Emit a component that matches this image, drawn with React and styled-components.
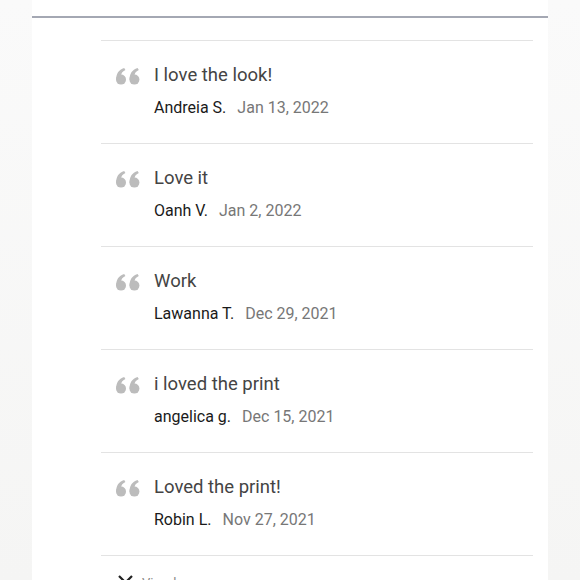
import styled, { createGlobalStyle } from "styled-components";

const GlobalStyle = createGlobalStyle`
  html, body {
    margin: 0;
    padding: 0;
    background: #f6f6f6;
    font-family: Roboto, "Liberation Sans", sans-serif;
  }
`;

const Page = styled.div`
  width: 580px;
  height: 580px;
  overflow: hidden;
  display: flex;
  justify-content: center;
  background: linear-gradient(180deg, #fafafa 0%, #f5f5f4 100%);
`;

const Panel = styled.div`
  width: 516px;
  background: #fff;
  padding-top: 16px;
  display: flex;
  flex-direction: column;
`;

const TopRule = styled.div`
  flex: none;
  height: 2px;
  background: #a4a8b3;
`;

const List = styled.ul`
  flex: none;
  list-style: none;
  margin: 22px 15px 0 69px;
  padding: 0;
`;

const Review = styled.li`
  display: flex;
  gap: 14px;
  padding: 22px 0 24px 15px;
  border-top: 1px solid #e3e3e3;
`;

const Quote = styled.svg`
  flex: none;
  width: 24px;
  height: 17px;
  margin-top: 5px;
  fill: #bcbcbc;
`;

const Body = styled.div`
  display: flex;
  flex-direction: column;
  gap: 10px;
`;

const Title = styled.div`
  font-size: 18.5px;
  line-height: 24px;
  color: #444;
`;

const Meta = styled.div`
  display: flex;
  align-items: baseline;
  gap: 11px;
  line-height: 22px;
`;

const Name = styled.span`
  font-size: 16px;
  color: #1a1a1a;
`;

const PostedOn = styled.span`
  font-size: 16px;
  color: #777;
`;

const More = styled.div`
  display: flex;
  align-items: center;
  gap: 8px;
  padding: 18px 0 0 16px;
  border-top: 1px solid #e3e3e3;
  color: #888;
  font-size: 13px;
`;

const QuoteIcon = () => (
  <Quote viewBox="0 0 24 17">
    <circle cx="5" cy="11.6" r="5" />
    <path d="M0.2 11.6 C0 6 2.6 1.8 8.2 0 L9.4 2.1 C6.4 3.4 5 5.6 5.1 8.2 Z" />
    <circle cx="18.4" cy="11.6" r="5" />
    <path d="M13.6 11.6 C13.4 6 16 1.8 21.6 0 L22.8 2.1 C19.8 3.4 18.4 5.6 18.5 8.2 Z" />
  </Quote>
);

const reviews = [
  { text: "I love the look!", name: "Andreia S.", date: "Jan 13, 2022" },
  { text: "Love it", name: "Oanh V.", date: "Jan 2, 2022" },
  { text: "Work", name: "Lawanna T.", date: "Dec 29, 2021" },
  { text: "i loved the print", name: "angelica g.", date: "Dec 15, 2021" },
  { text: "Loved the print!", name: "Robin L.", date: "Nov 27, 2021" },
];

export default function App() {
  return (
    <>
      <GlobalStyle />
      <Page>
        <Panel>
          <TopRule />
          <List>
            {reviews.map((r) => (
              <Review key={r.name}>
                <QuoteIcon />
                <Body>
                  <Title>{r.text}</Title>
                  <Meta>
                    <Name>{r.name}</Name>
                    <PostedOn>{r.date}</PostedOn>
                  </Meta>
                </Body>
              </Review>
            ))}
            <More>
              <svg width="17" height="17" viewBox="0 0 17 17" stroke="#222" strokeWidth="2.2" fill="none">
                <path d="M2 2 L15 15 M15 2 L2 15" />
              </svg>
              <span>View less</span>
            </More>
          </List>
        </Panel>
      </Page>
    </>
  );
}
